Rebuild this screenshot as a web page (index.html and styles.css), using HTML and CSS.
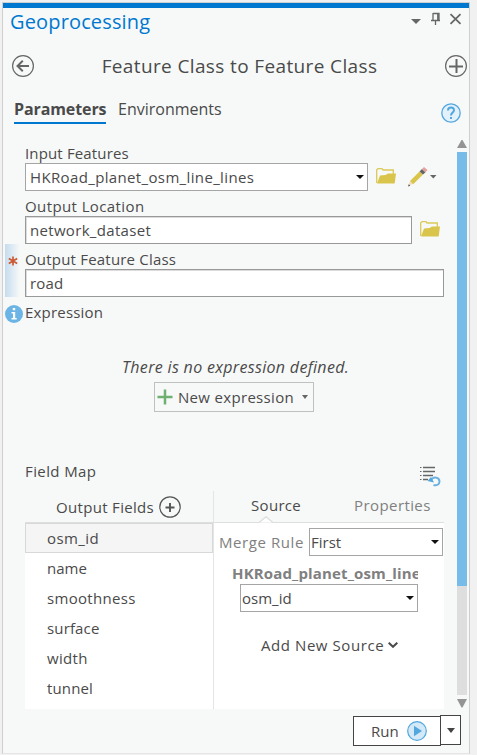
FILE: index.html
```html
<!DOCTYPE html>
<html lang="en">
<head>
<meta charset="utf-8">
<title>Geoprocessing</title>
<link rel="stylesheet" href="styles.css">
</head>
<body>
<svg class="defs" width="0" height="0" aria-hidden="true">
  <symbol id="folder" viewBox="0 0 20 16">
    <path d="M.700 15V1.700L2 .700h4l1 1.300h10.300V6" fill="none" stroke="#dcc95b" stroke-width="1.300"/>
    <path d="M1 15.500 4 7.500l5.500-.500L12 5.500h8l-1.300 10z" fill="#dac54c"/>
  </symbol>
  <symbol id="caret" viewBox="0 0 8 4"><path d="M0 0h8L4 4z" fill="currentColor"/></symbol>
</svg>
<main class="pane">
  <header class="titlebar">
    <h1 class="pane-title">Geoprocessing</h1>
    <svg class="window-icons" width="54" height="16" viewBox="0 0 54 16" fill="none" stroke="#666" stroke-width="1.300">
      <path d="M0 8h10l-5 5z" fill="#666" stroke="none"/>
      <path d="M22 2.500h6v6.500M22 2v7M20 9.500h9M24.500 10v4"/><path d="M27 3v6" stroke-width="1.800"/>
      <path d="M39.500 3.200l10 9.600M49.500 3.200l-10 9.600" stroke-width="1.800"/>
    </svg>
  </header>
  <div class="toolbar">
    <svg width="24" height="24" viewBox="0 0 24 24" fill="none" stroke="#666"><circle cx="12" cy="12" r="10.400" stroke-width="1.200"/><path d="M18 12H7M11.800 6.800 6.500 12l5.300 5.200" stroke-width="2"/></svg>
    <h2 class="tool-title">Feature Class to Feature Class</h2>
    <svg width="24" height="24" viewBox="0 0 24 24" fill="none" stroke="#666"><circle cx="12" cy="12" r="10.400" stroke-width="1.200"/><path d="M5 12.500h14M12.500 5v14" stroke-width="2"/></svg>
  </div>
  <nav class="tabs">
    <span class="tab active">Parameters</span>
    <span class="tab tab-env">Environments</span>
    <svg class="help" width="20" height="20" viewBox="0 0 20 20" fill="none" stroke="#52a7de"><circle cx="10" cy="10" r="9.200" fill="#e3f1fb" stroke-width="1.300"/><path d="M7 7.500C7 3.500 13 3.500 13 7.200 13 9.500 10 9.500 10 12.500M10 14v2" stroke-width="2"/></svg>
  </nav>
  <div class="body">
    <div class="form">
      <div class="label"><span class="t-input">Input Features</span></div>
      <div class="row">
        <div class="field w-input"><span class="t-hk">HKRoad_planet_osm_line_lines</span><svg class="caret" width="8" height="4"><use href="#caret"/></svg></div>
        <svg class="folder" width="20" height="16"><use href="#folder"/></svg>
        <svg class="pencil" width="30" height="22" viewBox="0 0 30 22">
          <path d="M1 20l2-5 3 3z" fill="#f3ddc0"/><path d="M1 20.500l.800-2.300 1.500 1.500z" fill="#555"/>
          <path d="M3 15 12.500 5.500l3.500 3L6.200 18.200z" fill="#dac54c"/>
          <path d="M12.500 5.500 15 3l3.500 3.200L16 8.500z" fill="#666"/><path d="M15 3l2-2 3.500 3-2 2.200z" fill="#e6a19c"/>
          <path d="M23 9h6.500l-3.200 3.500z" fill="#666"/>
        </svg>
      </div>
      <div class="label"><span class="t-outloc">Output Location</span></div>
      <div class="row">
        <div class="field inset w-loc"><span class="t-net">network_dataset</span></div>
        <svg class="folder" width="20" height="16"><use href="#folder"/></svg>
      </div>
      <div class="required">
        <svg class="star" width="10" height="10" viewBox="0 0 10 10" stroke="#cb5a34" stroke-width="1.700"><path d="M5 .500v9M.800 2.500l8.400 5M9.200 2.500l-8.400 5"/></svg>
        <div class="label"><span class="t-outfc">Output Feature Class</span></div>
        <div class="field inset"><span class="t-road">road</span></div>
      </div>
      <div class="expression-label">
        <svg width="18" height="18" viewBox="0 0 18 18"><circle cx="9" cy="9" r="9" fill="#6bb5e6"/><path d="M7.800 3h2.400v2.200H7.800zM6.500 7h3.700v6h1.500v1.500H6.500V13h1.500V8.400H6.500z" fill="#fff"/></svg>
        <span class="t-expr">Expression</span>
      </div>
      <p class="empty"><span class="t-empty">There is no expression defined.</span></p>
      <button class="new-expression">
        <svg width="16" height="16" viewBox="0 0 16 16" stroke="#6db070" stroke-width="2.500"><path d="M.500 8h15M8 .500v15"/></svg>
        <span class="t-new">New expression</span>
        <svg class="grey-caret" width="6" height="4" viewBox="0 0 6 4"><path d="M0 0h6L3 4z" fill="currentColor"/></svg>
      </button>
      <div class="map-head">
        <span class="t-map">Field Map</span>
        <svg width="21" height="21" viewBox="0 0 21 21" fill="none"><path d="M3 1.500h12M3 5.500h12M3 9.500h10M3 13.500h5" stroke="#666" stroke-width="1.400"/><path d="M0 1.500h1.500M0 5.500h1.500M0 9.500h1.500M0 13.500h1.500" stroke="#666"/><path d="M11 14.500C13 10 19.500 11 19.500 15.500c0 3-3 4.500-6 3.500" stroke="#6bb0df" stroke-width="2"/><path d="M7.500 15l3.500-4 3 5.500z" fill="#52a7de"/></svg>
      </div>
      <section class="field-map">
        <div class="outputs">
          <div class="outputs-head"><span class="t-of">Output Fields</span><svg width="22" height="22" viewBox="0 0 22 22" fill="none" stroke="#555"><circle cx="11" cy="11" r="10.200" stroke-width="1.200"/><path d="M6.500 11.500h9M11 7v9" stroke-width="1.900"/></svg></div>
          <ul class="fields">
            <li class="selected"><span class="t-osm">osm_id</span></li>
            <li><span class="t-name">name</span></li>
            <li><span class="t-smooth">smoothness</span></li>
            <li><span class="t-surf">surface</span></li>
            <li><span class="t-width">width</span></li>
            <li><span class="t-tun">tunnel</span></li>
          </ul>
        </div>
        <div class="source">
          <div class="source-tabs"><span class="t-source">Source</span><span class="t-prop">Properties</span>
            <svg class="notch" width="14" height="7" viewBox="0 0 14 7"><path d="M0 6.500 7 .700l7 5.800" fill="#fff" stroke="#dcdede" stroke-width="1.300"/></svg></div>
          <div class="merge"><span class="t-merge">Merge Rule</span><div class="field"><span class="t-first">First</span><svg class="caret" width="8" height="4"><use href="#caret"/></svg></div></div>
          <div class="source-name"><span class="t-bold">HKRoad_planet_osm_line</span></div>
          <div class="field w-osm"><span>osm_id</span><svg class="caret" width="8" height="4"><use href="#caret"/></svg></div>
          <div class="add-source"><span class="t-add">Add New Source</span><svg width="10" height="6" viewBox="0 0 10 6" fill="none" stroke="#4a4a4a" stroke-width="2"><path d="M.700.700 5 4.800 9.300.700"/></svg></div>
        </div>
      </section>
    </div>
    <div class="scrollbar">
      <svg width="10" height="9" viewBox="0 0 10 9"><path d="M0 9h10L5.500 1h-1z" fill="#949494"/></svg>
      <div class="track"><div class="thumb"></div></div>
      <svg width="10" height="9" viewBox="0 0 10 9"><path d="M0 0h10L5.500 8.500h-1z" fill="#949494"/></svg>
    </div>
  </div>
  <footer class="footer">
    <button class="run"><span class="t-run">Run</span><svg width="20" height="20" viewBox="0 0 20 20"><circle cx="10" cy="10" r="9.300" fill="#d3e9f8" stroke="#52a7de" stroke-width="1.200"/><path d="M7 4.800 15 10l-8 5.200z" fill="#52a7de"/></svg></button>
    <button class="run-menu"><svg width="8" height="5" viewBox="0 0 8 5"><path d="M0 0h8L4 5z" fill="#444"/></svg></button>
  </footer>
</main>
</body>
</html>
```
FILE: styles.css
```css
* { box-sizing: border-box; }
body { margin: 0; width: 477px; height: 755px; overflow: hidden; background: #f1f1f1; font: 15px/20px "Open Sans", sans-serif; color: #4a4a4a; }
svg { display: block; flex: none; }
.defs { position: absolute; }
span { white-space: nowrap; }
button { font: inherit; color: inherit; padding: 0; margin: 0; }
.pane { width: 468px; height: 752px; margin: 2px 0 0 2px; background: #f7f9f8; border: 1px solid #cfcfcf; border-bottom-color: #e6e6e6; }
.titlebar { height: 35px; border-top: 5px solid #0078d0; padding: 0 9px 0 7px; display: flex; justify-content: space-between; }
.pane-title { margin: 0; font-size: 20px; line-height: 27px; font-weight: 400; color: #0078d0; letter-spacing: .15px; }
.window-icons { margin: 3px -5px 0 0; }
.toolbar { height: 56px; display: flex; align-items: center; justify-content: space-between; padding: 0 1px 0 8px; }
.tool-title { margin: 0; font-size: 19px; font-weight: 400; line-height: 24px; letter-spacing: .37px; }
.tabs { height: 37px; display: flex; align-items: flex-start; padding-left: 11px; font-size: 16px; }
.tab { height: 30px; line-height: 31px; }
.tab.active { font-weight: 700; border-bottom: 2px solid #0078d0; width: 92px; margin-right: 12px; letter-spacing: -.1px; }
.help { margin: 9px 8px 0 auto; }
.body { display: flex; height: 576px; }
.form { width: 441px; padding: 11px 0 0 22px; }
.label { height: 21px; line-height: 22px; }
.row { display: flex; align-items: center; height: 28px; margin-bottom: 4px; }
.field { height: 28px; background: #fff; border: 1px solid #a5a5a5; display: flex; align-items: center; justify-content: space-between; padding: 0 3px 0 4px; }
.inset { border-color: #999; box-shadow: inset 1px 1px 0 #dcdcdc; }
.caret { color: #111; }
.w-input { width: 343px; }
.w-loc { width: 387px; }
.folder { margin: -2px 0 0 8px; }
.pencil { margin-left: 11px; }
.required { position: relative; margin: -4px 0 0 -20px; padding: 4px 0 0 20px; width: 439px; background: linear-gradient(90deg, #c6dcef, #f7f9f8 15px); }
.star { position: absolute; left: 3px; top: 12px; }
.expression-label { display: flex; align-items: center; gap: 2px; margin: 7px 0 0 -20px; height: 20px; }
.t-expr { margin-top: -4px; }
.empty { margin: 33px 0 5px; height: 20px; padding-left: 97px; font-style: italic; font-size: 16px; }
.new-expression { display: flex; align-items: center; width: 160px; height: 30px; margin-left: 129px; border: 1px solid #bfc1c0; background: transparent; padding: 0 5px 0 2px; }
.new-expression .t-new { margin: 0 auto 0 5px; }
.grey-caret { color: #666; }
.map-head { height: 79px; padding: 49px 2px 0 0; display: flex; justify-content: space-between; width: 418px; }
.map-head svg { margin-top: 5px; }
.field-map { display: flex; width: 419px; height: 218px; background: #fff; }
.outputs { width: 189px; border-right: 1px solid #e3e5e4; }
.outputs-head { height: 32px; background: #f7f9f8; border-bottom: 1px solid #dedede; display: flex; align-items: center; padding-left: 31px; gap: 5px; }
.fields { list-style: none; margin: 0; padding: 0; }
.fields li { height: 30px; line-height: 30px; padding-left: 22px; }
.fields .selected { background: #f5f5f5; border: 1px solid #d6d9d8; padding-left: 21px; line-height: 28px; }
.source { width: 230px; }
.source-tabs { position: relative; height: 32px; line-height: 28px; background: #f7f9f8; border-bottom: 1px solid #dedede; padding-left: 37px; display: flex; gap: 53px; }
.t-prop, .merge, .source-name { color: #808080; }
.notch { position: absolute; left: 45px; bottom: -1px; }
.merge { display: flex; align-items: center; height: 28px; margin: 5px 0 0 5px; }
.merge .field { width: 134px; margin-left: auto; margin-right: 1px; padding: 0 3px 0 1px; color: #4a4a4a; }
.source-name { width: 186px; margin: 7px 0 0 18px; overflow: hidden; height: 21px; font-weight: 700; }
.w-osm { width: 178px; margin-left: 26px; padding: 0 3px 0 1px; }
.add-source { display: flex; align-items: center; gap: 4px; margin: 23px 0 0 47px; }
.scrollbar { width: 10px; margin-left: 13px; padding-top: 8px; }
.track { height: 543px; margin: 4px 0; background: #dedede; }
.thumb { height: 434px; background: #77bce8; }
.footer { display: flex; padding: 8px 0 0 350px; }
.run { width: 88px; height: 30px; border: 1px solid #444; background: #fff; display: flex; align-items: center; padding-left: 17px; gap: 8px; margin-top: 1px; }
.run-menu { width: 21px; height: 30px; margin-left: -1px; border: 1px solid #444; background: #fff; display: flex; align-items: center; justify-content: center; }

/* Tracking per text run */
.t-input { letter-spacing: .15px; }
.t-outfc, .t-expr, .t-road { letter-spacing: .2px; }
.t-hk { letter-spacing: .36px; }
.t-outloc, .t-map, .t-osm { letter-spacing: .4px; }
.t-net, .t-new, .t-of, .t-smooth, .t-width, .t-source, .t-empty { letter-spacing: .32px; }
.t-surf, .t-tun, .t-bold { letter-spacing: .15px; }
.t-prop { letter-spacing: .4px; }
.t-merge, .t-add { letter-spacing: .57px; }
```
